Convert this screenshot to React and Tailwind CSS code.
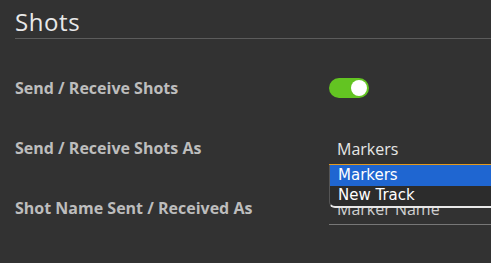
export default function App() {
  return (
    <div className="w-[491px] h-[263px] bg-[#323232] overflow-hidden font-['Open_Sans',sans-serif]">
      <div className="pl-[15px] pt-[6px]">
        <h1 className="text-[24px] leading-[31px] tracking-[0.6px] text-[#e8e8e8] font-normal">Shots</h1>
        <div className="mt-[1px] h-px bg-[#5c5c5c]" />
      </div>

      <div className="pl-[15px] pt-[39px] flex flex-col">
        <div className="flex items-center h-[20px]">
          <div className="w-[314px] text-[16px] font-bold text-[#bdbdbd]">Send / Receive Shots</div>
          <div className="w-[40px] h-[20px] rounded-full bg-[#63c422] flex items-center justify-end pr-[2px]">
            <div className="w-[16px] h-[16px] rounded-full bg-white" />
          </div>
        </div>

        <div className="flex items-center h-[20px] mt-[40px]">
          <div className="w-[314px] text-[16px] font-bold text-[#bdbdbd]">Send / Receive Shots As</div>
          <div className="relative flex-1 self-stretch">
            <div className="h-[27px] pl-[8px] pt-[1px] border-b border-[#e39a1f] text-[16px] leading-[20px] text-[#e6e6e6]">
              Markers
            </div>
            <div className="absolute left-0 right-[-10px] top-[27px] z-10 bg-[#2c2c2c] border-b-2 border-b-[#e8e8e8] border-l border-l-[#555] rounded-bl-[6px] font-['DejaVu_Sans',sans-serif] text-[15px] text-white">
              <div className="h-[21px] bg-[#1f66d1] pl-[8px] leading-[21px]">Markers</div>
              <div className="h-[20px] pl-[8px] leading-[19px]">New Track</div>
            </div>
          </div>
        </div>

        <div className="flex items-center h-[20px] mt-[40px]">
          <div className="w-[314px] text-[16px] font-bold text-[#bdbdbd]">Shot Name Sent / Received As</div>
          <div className="flex-1 self-stretch">
            <div className="h-[27px] pl-[8px] pt-[1px] border-b border-[#777] text-[16px] leading-[20px] text-[#cfcfcf]">
              Marker Name
            </div>
          </div>
        </div>
      </div>
    </div>
  );
}
